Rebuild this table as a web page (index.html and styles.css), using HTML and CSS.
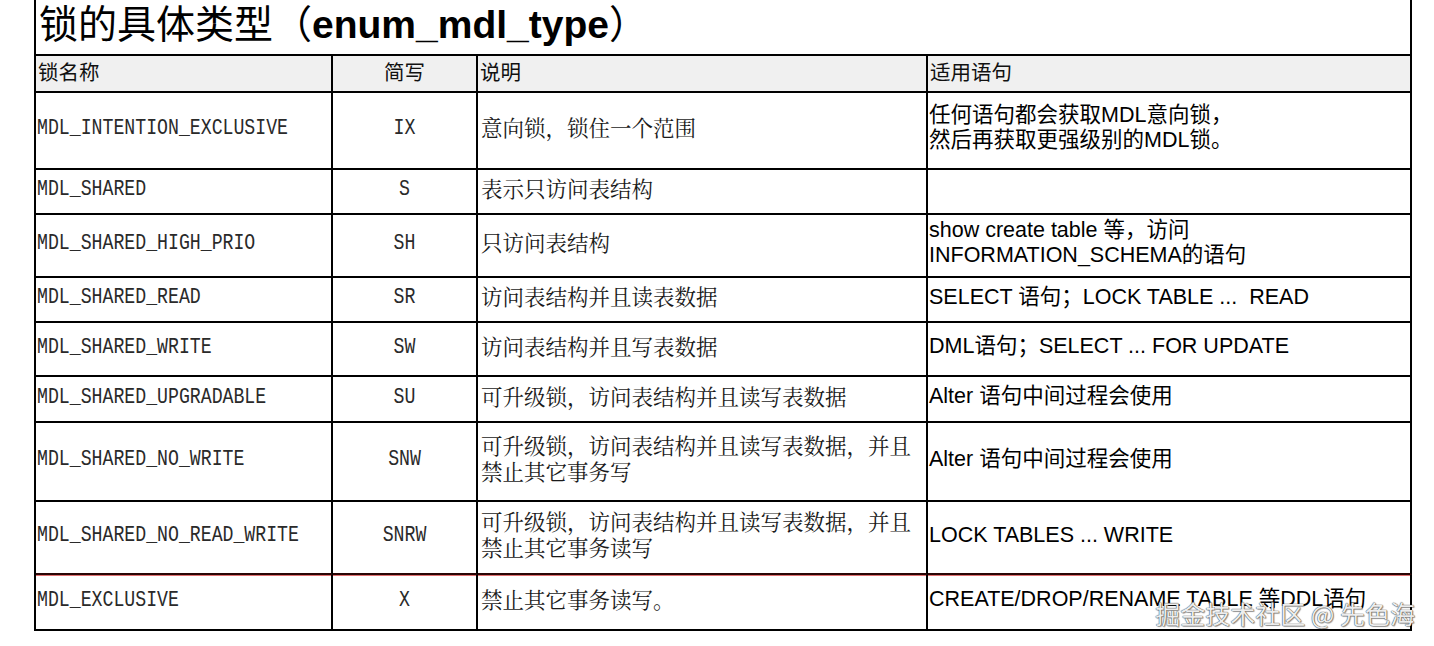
FILE: index.html
```html
<!DOCTYPE html>
<html lang="zh-CN">
<head>
<meta charset="utf-8">
<title>锁的具体类型</title>
<link rel="stylesheet" href="styles.css">
</head>
<body>
<div class="sheet">
  <div class="title"><span class="title-cn">锁的具体类型（</span><span class="title-en">enum_mdl_type</span><span class="title-cn">）</span></div>
  <div class="grid">
    <div class="cell head">锁名称</div>
    <div class="cell head center">简写</div>
    <div class="cell head">说明</div>
    <div class="cell head">适用语句</div>

    <div class="cell name"><span class="mono">MDL_INTENTION_EXCLUSIVE</span></div>
    <div class="cell abbr"><span class="mono">IX</span></div>
    <div class="cell desc">意向锁，锁住一个范围</div>
    <div class="cell stmt">任何语句都会获取MDL意向锁，<br>然后再获取更强级别的MDL锁。</div>

    <div class="cell name"><span class="mono">MDL_SHARED</span></div>
    <div class="cell abbr"><span class="mono">S</span></div>
    <div class="cell desc">表示只访问表结构</div>
    <div class="cell stmt"></div>

    <div class="cell name"><span class="mono">MDL_SHARED_HIGH_PRIO</span></div>
    <div class="cell abbr"><span class="mono">SH</span></div>
    <div class="cell desc">只访问表结构</div>
    <div class="cell stmt">show create table 等，访问<br>INFORMATION_SCHEMA的语句</div>

    <div class="cell name"><span class="mono">MDL_SHARED_READ</span></div>
    <div class="cell abbr"><span class="mono">SR</span></div>
    <div class="cell desc">访问表结构并且读表数据</div>
    <div class="cell stmt">SELECT 语句；LOCK TABLE ...&nbsp; READ</div>

    <div class="cell name"><span class="mono">MDL_SHARED_WRITE</span></div>
    <div class="cell abbr"><span class="mono">SW</span></div>
    <div class="cell desc">访问表结构并且写表数据</div>
    <div class="cell stmt">DML语句；SELECT ... FOR UPDATE</div>

    <div class="cell name"><span class="mono">MDL_SHARED_UPGRADABLE</span></div>
    <div class="cell abbr"><span class="mono">SU</span></div>
    <div class="cell desc">可升级锁，访问表结构并且读写表数据</div>
    <div class="cell stmt">Alter 语句中间过程会使用</div>

    <div class="cell name"><span class="mono">MDL_SHARED_NO_WRITE</span></div>
    <div class="cell abbr"><span class="mono">SNW</span></div>
    <div class="cell desc">可升级锁，访问表结构并且读写表数据，并且<br>禁止其它事务写</div>
    <div class="cell stmt">Alter 语句中间过程会使用</div>

    <div class="cell name red-bottom"><span class="mono">MDL_SHARED_NO_READ_WRITE</span></div>
    <div class="cell abbr red-bottom"><span class="mono">SNRW</span></div>
    <div class="cell desc red-bottom">可升级锁，访问表结构并且读写表数据，并且<br>禁止其它事务读写</div>
    <div class="cell stmt red-bottom">LOCK TABLES ... WRITE</div>

    <div class="cell name last"><span class="mono">MDL_EXCLUSIVE</span></div>
    <div class="cell abbr last"><span class="mono">X</span></div>
    <div class="cell desc last">禁止其它事务读写。</div>
    <div class="cell stmt last">CREATE/DROP/RENAME TABLE 等DDL语句</div>
  </div>
  <div class="watermark">掘金技术社区 @ 先色海</div>
</div>
</body>
</html>
```

FILE: styles.css
```css
* { box-sizing: border-box; }
html, body { margin: 0; padding: 0; background: #fff; }
body { font-family: "Liberation Sans", "Noto Sans CJK SC", sans-serif; color: #000; }

.sheet {
  position: relative;
  margin-left: 34px;
  width: 1378px;
}

.title {
  height: 54px;
  border-left: 2px solid #000;
  border-right: 2px solid #000;
  padding-left: 3px;
  font-size: 39px;
  line-height: 42px;
  white-space: nowrap;
}
.title-cn { font-family: "Noto Sans CJK SC", sans-serif; font-weight: 400; }
.title-en { font-family: "Liberation Sans", Arial, sans-serif; font-weight: 700; }

.grid {
  display: grid;
  grid-template-columns: 297px 145px 450px 484px;
  grid-template-rows: 37px 77px 45px 63px 45px 54px 46px 79px 73px 56px;
  border-left: 2px solid #000;
  border-top: 2px solid #000;
}

.cell {
  display: flex;
  align-items: center;
  border-right: 2px solid #000;
  border-bottom: 2px solid #000;
  padding: 0 2px 5px 2px;
  overflow: hidden;
  white-space: nowrap;
}

.head {
  background: #f0f0f0;
  font-family: "Noto Sans CJK SC", sans-serif;
  font-size: 20.5px;
  padding-left: 2px;
  padding-bottom: 6px;
  color: #111;
}
.center { justify-content: center; }

.mono {
  display: inline-block;
  font-family: "Liberation Mono", "DejaVu Sans Mono", monospace;
  font-size: 18.2px;
  line-height: 20px;
  transform: scale(1, 1.26);
  color: #2a2a2a;
}
.name { padding-left: 1px; }
.abbr { justify-content: center; }

.desc {
  font-family: "Noto Serif CJK SC", "Noto Sans CJK SC", serif;
  font-size: 21.5px;
  line-height: 26px;
  padding-left: 3px;
  padding-bottom: 7px;
  color: #1a1a1a;
}
.stmt {
  font-family: "Liberation Sans", Arial, "Noto Sans CJK SC", sans-serif;
  font-size: 21.5px;
  line-height: 25px;
  padding-left: 1px;
  color: #000;
}

.red-bottom { border-bottom-color: #2a0606; }
.last { box-shadow: inset 0 1px 0 #e07070; }

.watermark {
  position: absolute;
  right: -3px;
  bottom: 3px;
  font-family: "Noto Sans CJK SC", sans-serif;
  font-size: 25px;
  line-height: 30px;
  color: rgba(255, 255, 255, 0.92);
  text-shadow: 0 0 1px #444, 0 0 1px #444, 1px 1px 1px rgba(0, 0, 0, 0.35);
  white-space: nowrap;
}
```
